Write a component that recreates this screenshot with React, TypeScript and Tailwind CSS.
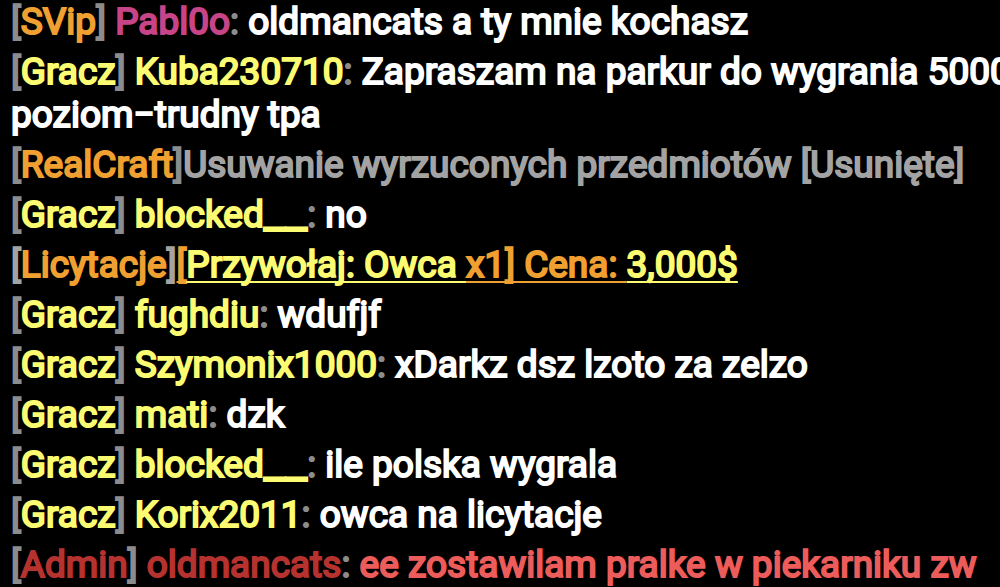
import React from 'react';

interface Part {
  text: string;
  color: string;
  style?: string;
}

interface Message {
  id: number;
  parts: Part[];
  item?: Part[];
}

const GRAY = 'text-[#8c8c8c]';
const ORANGE = 'text-[#f0a030]';
const YELLOW = 'text-[#fcfc72]';
const PINK = 'text-[#c84488]';
const DARK_RED = 'text-[#b5322f]';
const RED = 'text-[#ec5c5a]';
const SILVER = 'text-[#a3a3a3]';
const WHITE = 'text-white';

const chat = (
  id: number,
  rank: string,
  rankColor: string,
  nick: string,
  nickColor: string,
  body: string,
  bodyColor = WHITE,
): Message => {
  const [first, ...rest] = body.split('\n');
  return {
    id,
    parts: [
      { text: '[', color: GRAY },
      { text: rank, color: rankColor },
      { text: '] ', color: GRAY },
      { text: nick.replace(/_+$/, ''), color: nickColor },
      // trailing underscores are drawn wider than the font's own
      ...(nick.endsWith('_') ? [{ text: nick.slice(nick.indexOf('_')), color: nickColor, style: 'text-[48px] leading-[0]' }] : []),
      { text: ': ', color: GRAY },
      { text: first, color: bodyColor },
      ...rest.map((line) => ({ text: line, color: bodyColor, style: 'block' })),
    ],
  };
};

const messages: Message[] = [
  chat(1, 'SVip', ORANGE, 'Pabl0o', PINK, 'oldmancats a ty mnie kochasz'),
  chat(2, 'Gracz', YELLOW, 'Kuba230710', YELLOW, 'Zapraszam na parkur do wygrania 5000\npoziom−trudny tpa'),
  {
    id: 3,
    parts: [
      { text: '[', color: GRAY },
      { text: 'RealCraft', color: ORANGE },
      { text: ']', color: GRAY },
      { text: 'Usuwanie wyrzuconych przedmiotów [Usunięte]', color: SILVER },
    ],
  },
  chat(4, 'Gracz', YELLOW, 'blocked__', YELLOW, 'no'),
  {
    id: 5,
    parts: [
      { text: '[', color: SILVER },
      { text: 'Licytacje', color: ORANGE },
      { text: ']', color: SILVER },
    ],
    item: [
      { text: '[', color: ORANGE },
      { text: 'Przywołaj: Owca ', color: YELLOW },
      { text: 'x1] Cena: ', color: ORANGE },
      { text: '3,000$', color: YELLOW },
    ],
  },
  chat(6, 'Gracz', YELLOW, 'fughdiu', YELLOW, 'wdufjf'),
  chat(7, 'Gracz', YELLOW, 'Szymonix1000', YELLOW, 'xDarkz dsz lzoto za zelzo'),
  chat(8, 'Gracz', YELLOW, 'mati', YELLOW, 'dzk'),
  chat(9, 'Gracz', YELLOW, 'blocked__', YELLOW, 'ile polska wygrala'),
  chat(10, 'Gracz', YELLOW, 'Korix2011', YELLOW, 'owca na licytacje'),
  chat(11, 'Admin', DARK_RED, 'oldmancats', DARK_RED, 'ee zostawilam pralke w piekarniku zw', RED),
];

const Parts: React.FC<{ parts: Part[] }> = ({ parts }) => (
  <>
    {parts.map((part, i) => (
      <span key={i} className={`${part.color} ${part.style ?? ''}`}>{part.text}</span>
    ))}
  </>
);

const App: React.FC = () => (
  <main className="h-screen overflow-hidden bg-black">
    <ul className="flex flex-col gap-[7px] px-[11px] font-[Roboto,sans-serif] text-[37px] leading-[43px] font-normal whitespace-pre [-webkit-text-stroke:2px_currentColor]">
      {messages.map((message) => (
        <li key={message.id}>
          <Parts parts={message.parts} />
          {message.item && (
            <a
              href="#licytacje"
              className="[&>span]:underline [&>span]:decoration-2 [&>span]:underline-offset-4 [&>span]:[text-decoration-skip-ink:none]"
            >
              <Parts parts={message.item} />
            </a>
          )}
        </li>
      ))}
    </ul>
  </main>
);

export default App;
